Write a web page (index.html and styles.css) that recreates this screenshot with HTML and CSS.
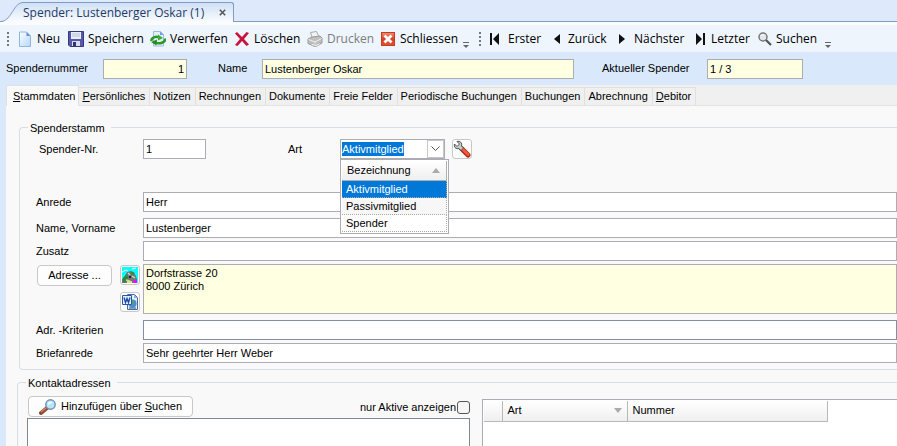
FILE: index.html
```html
<!DOCTYPE html>
<html lang="de">
<head>
<meta charset="utf-8">
<title>Spender: Lustenberger Oskar (1)</title>
<link rel="stylesheet" href="styles.css">
</head>
<body>
<header class="window-tabs">
  <svg class="tab-slope" viewBox="0 0 22 20" width="22" height="20" aria-hidden="true">
    <defs><linearGradient id="slope" x1="0" y1="0" x2="0" y2="1"><stop offset="0" stop-color="#cfe0f5"/><stop offset="1" stop-color="#fafcff"/></linearGradient></defs>
    <path d="M0 20C5 19 7 16 10 12C14 6 16 1 22 .5V20Z" fill="url(#slope)"/>
    <path d="M0 19.5C5 19 7 16 10 12C14 6 16 1 22 .5" fill="none" stroke="#7e9cc4"/>
  </svg>
  <div class="window-tab">
    <span>Spender: Lustenberger Oskar (1)</span>
    <button type="button" class="close" aria-label="Tab schliessen"><svg width="7" height="7" viewBox="0 0 7 7"><path d="M.8 .8L6.2 6.2M6.2 .8L.8 6.2" stroke="#555" stroke-width="1.5"/></svg></button>
  </div>
</header>

<nav class="toolbar" aria-label="Werkzeugleiste">
  <span class="grip"></span>
  <button type="button"><svg width="16" height="16" viewBox="0 0 16 16"><defs><linearGradient id="page" x1="0" y1="0" x2="1" y2="1"><stop offset="0" stop-color="#fff"/><stop offset="1" stop-color="#b4d6fb"/></linearGradient></defs><path d="M2.5 1H9.5L13.5 5V15.5H2.5Z" fill="url(#page)" stroke="#91b4e2"/><path d="M9.5 1V5H13.5Z" fill="#5c94d8"/></svg>Neu</button>
  <button type="button"><svg width="16" height="16" viewBox="0 0 16 16"><path d="M.5 .5H15.5V15.5H2L.5 14Z" fill="#5858ab" stroke="#37377f"/><path d="M3 1H13V8H3Z" fill="#e9edf8"/><path d="M4 3H12M4 5H12" stroke="#b9c2dc"/><path d="M4 10H12V15H4Z" fill="#d8dcec"/><path d="M5 11H8V15H5Z" fill="#33336e"/></svg>Speichern</button>
  <button type="button"><svg width="16" height="16" viewBox="0 0 16 16"><path d="M3.500 .5H10.500L13.500 3.500V15H3.500Z" fill="#e3effd" stroke="#9abbe4"/><path d="M10 .5V4H13.500Z" fill="#6c9fdd"/><path d="M1.500 10C1 6.500 6 5 9 6.500" fill="none" stroke="#2d9926" stroke-width="2.500"/><path d="M8 3.500L13 7L8 9.500Z" fill="#3cae2c"/><path d="M15 7.500C16 11.500 9 13.500 5.500 11.500" fill="none" stroke="#2d9926" stroke-width="2.500"/><path d="M7 8.500L1 11L6.500 14.500Z" fill="#258c20"/></svg>Verwerfen</button>
  <button type="button"><svg width="16" height="16" viewBox="0 0 16 16"><path d="M1 2.500L3 1L8 6L12.500 1L15 2L10 8L15 13.500L12.500 15L8 10L3.500 15L1 14L6 8Z" fill="#c8143c"/></svg>Löschen</button>
  <button type="button" disabled><svg width="16" height="16" viewBox="0 0 16 16"><path d="M3.500 1.500L9.500 .5L12 6L5.500 8Z" fill="#f4f4f4" stroke="#aaa"/><path d="M1 8L5 6L13 5L15 7V12L8 15.500L1 12.500Z" fill="#c0c0c0" stroke="#999"/><path d="M1.500 8.500L8 11L14.500 7.500M8 11V15" fill="none" stroke="#eee"/><path d="M4 12L9 13.500L13 11.500V13.500L9 15.500L4 14Z" fill="#f7f7f7" stroke="#999" stroke-width=".6"/></svg>Drucken</button>
  <button type="button"><svg width="16" height="16" viewBox="0 0 16 16"><defs><linearGradient id="red" x1="0" y1="0" x2="0" y2="1"><stop offset="0" stop-color="#ee9271"/><stop offset=".5" stop-color="#df3d23"/><stop offset="1" stop-color="#d95435"/></linearGradient></defs><rect x="1.500" y="1.500" width="13" height="13" fill="url(#red)" stroke="#c83b1f"/><path d="M4.500 4.500L11.500 11.500M11.500 4.500L4.500 11.500" stroke="#fff" stroke-width="2.800"/></svg>Schliessen</button>
  <span class="more"></span>
  <span class="grip"></span>
  <button type="button" class="step"><svg width="12" height="12" viewBox="0 0 12 12"><path d="M1 0H3V12H1ZM10 0V12L4 6Z" fill="#111"/></svg>Erster</button>
  <button type="button" class="step"><svg width="9" height="12" viewBox="0 0 9 12"><path d="M8 1V11L2 6Z" fill="#111"/></svg>Zurück</button>
  <button type="button" class="step"><svg width="9" height="12" viewBox="0 0 9 12"><path d="M1 1V11L7 6Z" fill="#111"/></svg>Nächster</button>
  <button type="button"><svg width="12" height="12" viewBox="0 0 12 12"><path d="M1 0L7 6L1 12ZM8 0H10V12H8Z" fill="#111"/></svg>Letzter</button>
  <button type="button"><svg width="14" height="14" viewBox="0 0 14 14"><circle cx="5" cy="5" r="4" fill="#e3e7ea" stroke="#777" stroke-width="1.500"/><path d="M3 4Q4 2.500 6 3" fill="none" stroke="#fff"/><path d="M8 8L13 13" stroke="#555" stroke-width="2.200"/></svg>Suchen</button>
  <span class="more"></span>
</nav>

<section class="summary">
  <label for="s-nr">Spendernummer</label><input id="s-nr" class="field note num" value="1" readonly>
  <label for="s-name">Name</label><input id="s-name" class="field note" value="Lustenberger Oskar" readonly>
  <label for="s-akt">Aktueller Spender</label><input id="s-akt" class="field note" value="1 / 3" readonly>
</section>

<div class="page">
  <nav class="tabs" aria-label="Register">
    <button type="button" class="active"><u>S</u>tammdaten</button>
    <button type="button"><u>P</u>ersönliches</button>
    <button type="button">Notizen</button>
    <button type="button">Rechnungen</button>
    <button type="button">Dokumente</button>
    <button type="button">Freie Felder</button>
    <button type="button">Periodische Buchungen</button>
    <button type="button">Buchungen</button>
    <button type="button">Abrechnung</button>
    <button type="button"><u>D</u>ebitor</button>
  </nav>

  <main>
    <section class="group master">
      <h2>Spenderstamm</h2>
      <div class="row first">
        <label for="nr" class="inset">Spender-Nr.</label>
        <input id="nr" class="field" value="1">
        <label for="art">Art</label>
        <div class="combo">
          <select id="art"><option>Aktivmitglied</option><option>Passivmitglied</option><option>Spender</option></select>
          <button type="button" aria-label="Liste öffnen"><svg width="9" height="6" viewBox="0 0 9 6"><path d="M.5 .5L4.500 4.500L8.500 .5" fill="none" stroke="#555"/></svg></button>
          <table class="dropdown">
            <thead><tr><th><span>Bezeichnung</span><svg width="8" height="5" viewBox="0 0 8 5"><path d="M4 0L8 5H0Z" fill="#aaa"/></svg></th></tr></thead>
            <tbody><tr class="selected"><td>Aktivmitglied</td></tr><tr class="alt"><td>Passivmitglied</td></tr><tr><td>Spender</td></tr></tbody>
          </table>
        </div>
        <button type="button" class="btn icon" aria-label="Art bearbeiten"><svg width="18" height="18" viewBox="0 0 18 18"><path d="M8.500 8.500L15 15" stroke="#a52813" stroke-width="5" stroke-linecap="round"/><path d="M9 8.500L15 14.500" stroke="#f4593b" stroke-width="3" stroke-linecap="round"/><path d="M4 1.500C7 .5 9.500 3 8.500 6L10.500 8L8 10.500L6 8.500C3 9.500 .5 7 1.500 4L4 6.500L6.500 4Z" fill="#c6cbcb" stroke="#4f5656"/></svg></button>
      </div>
      <div class="row salutation"><label for="anrede">Anrede</label><input id="anrede" class="field" value="Herr"></div>
      <div class="row"><label for="vorname">Name, Vorname</label><input id="vorname" class="field" value="Lustenberger"></div>
      <div class="row"><label for="zusatz">Zusatz</label><input id="zusatz" class="field"></div>
      <div class="row address">
        <div class="address-tools">
          <button type="button" class="btn">Adresse ...</button>
          <div class="stack">
            <button type="button" class="btn icon" aria-label="Karte"><svg width="16" height="16" viewBox="0 0 16 16"><path d="M0 0H16V16H0Z" fill="#0ff"/><path d="M0 5L4 3L6 4M10 2L14 1" stroke="#fff" fill="none"/><path d="M0 16V12L3 9L5 5L9 4L13 7L15 12V16Z" fill="#6f7774"/><path d="M1 11L5 7L6 11L3 15H1ZM9 4L13 6L10 8Z" fill="#2b8a35"/><path d="M6 6L8 8M10 9L13 11M4 13L8 14" stroke="#c9cfcc" stroke-width="1.500"/><path d="M7 9H9V11H7Z" fill="#222"/><path d="M5 14H10V16H5Z" fill="#e8e070"/><path d="M11 13H15V16H12Z" fill="#f0f"/></svg></button>
            <button type="button" class="btn icon" aria-label="Word"><svg width="16" height="16" viewBox="0 0 16 16"><path d="M5.500 .5H12.500L15.500 3.500V15.500H5.500Z" fill="#e6effc" stroke="#456aa8"/><path d="M12 .5V4H15.500Z" fill="#8fb0df"/><circle cx="10.500" cy="9.500" r="4" fill="#4b8dcb"/><path d="M8 8L11 6L12 9L9 12Z" fill="#4cab62"/><path d="M.5 1.500H9.500V10.500H.5Z" fill="#e8f0ff" stroke="#2958a8"/><path d="M2 3.500L3.500 8.500L5 4.500L6.500 8.500L8 3.500" fill="none" stroke="#1d4ca4" stroke-width="1.400"/><path d="M7 14H14" stroke="#264c8c"/></svg></button>
          </div>
        </div>
        <textarea class="field note" aria-label="Adresse">Dorfstrasse 20
8000 Zürich</textarea>
      </div>
      <div class="row criteria"><label for="krit">Adr. -Kriterien</label><input id="krit" class="field"></div>
      <div class="row"><label for="brief">Briefanrede</label><input id="brief" class="field" value="Sehr geehrter Herr Weber"></div>
    </section>

    <section class="group contacts">
      <h2>Kontaktadressen</h2>
      <div class="contact-list">
        <div class="contact-head">
          <button type="button" class="btn search"><svg width="18" height="16" viewBox="0 0 18 16"><path d="M2 14L8 9" stroke="#8a4d37" stroke-width="4" stroke-linecap="round"/><path d="M2 13L7 9" stroke="#dc8756" stroke-width="1.500"/><circle cx="11.500" cy="5.500" r="4.700" fill="#b9e5fb" stroke="#7290b4" stroke-width="1.400"/><path d="M9 4.500Q11 1.500 13.500 3.500Q11 4 9 6Z" fill="#fff"/></svg><span>Hinzufügen über <u>S</u>uchen</span></button>
          <label class="check">nur Aktive anzeigen<input type="checkbox"></label>
        </div>
        <div class="listbox"></div>
      </div>
      <div class="numbers">
        <table>
          <thead><tr><th class="marker"></th><th class="kind"><div>Art<svg width="8" height="5" viewBox="0 0 8 5"><path d="M0 0H8L4 5Z" fill="#aaa"/></svg></div></th><th class="number">Nummer</th></tr></thead>
        </table>
      </div>
    </section>
  </main>
</div>
</body>
</html>
```

FILE: styles.css
```css
* { box-sizing: border-box; }
html, body { height: 100%; }
body {
  margin: 0;
  display: flex;
  flex-direction: column;
  overflow: hidden;
  background: #d9e9fb;
  color: #000;
  font: 11px/13px "Liberation Sans", Arial, sans-serif;
}
button, input, select, textarea { font: inherit; color: inherit; margin: 0; }
button { padding: 0; border: 0; background: none; }
svg { flex: none; display: block; }
h2 { margin: 0; font: inherit; }

/* Window tab strip */
.window-tabs {
  flex: none;
  display: flex;
  align-items: flex-end;
  height: 25px;
  padding: 0 0 3px 1px;
  background: linear-gradient(#deeafb 21px, #7e9cc4 21px, #7e9cc4 22px, #fafcff 22px);
}
.tab-slope { margin-right: -1px; }
.window-tab {
  display: flex;
  align-items: center;
  justify-content: space-between;
  width: 212px;
  height: 20px;
  padding: 0 7px 0 1px;
  border: solid #7e9cc4;
  border-width: 1px 1px 0 0;
  border-radius: 0 3px 0 0;
  background: linear-gradient(#cfe0f5, #fafcff);
  color: #1f3b68;
  font: 12px/18px "Open Sans", "Noto Sans", sans-serif;
  white-space: nowrap;
}

/* Toolbar */
.toolbar {
  flex: none;
  display: grid;
  grid-template-columns: 10px 51px 82px 84px 73px 73px 83px 16px 10px 63px 66px 77px 63px 67px 8px;
  align-items: center;
  height: 27px;
  padding-left: 7px;
  background: #eef5fd;
  font: 12px/16px "Open Sans", "Noto Sans", sans-serif;
  white-space: nowrap;
}
.toolbar button { display: flex; align-items: center; gap: 4px; }
.toolbar .step { gap: 7px; }
.toolbar button:disabled { color: #7d7d7d; }
.grip {
  width: 2px;
  height: 14px;
  background: repeating-linear-gradient(#777 0 2px, transparent 2px 4px);
}
.more {
  align-self: end;
  width: 6px;
  height: 10px;
  background: linear-gradient(#666, #666) top / 6px 1px no-repeat;
}
.more::after {
  content: "";
  display: block;
  margin-top: 3px;
  border: 3px solid transparent;
  border-top-color: #666;
}

/* Fields */
.field {
  min-width: 0;
  width: 100%;
  height: 20px;
  padding: 0 2px;
  border: 1px solid #abadb3;
  border-radius: 0;
  background: #fff;
  outline: 0;
}
.note { background: #ffffe1; }
.num { text-align: right; }

.summary {
  flex: none;
  display: grid;
  grid-template-columns: 97px 84px 75px 312px 133px 96px;
  align-items: center;
  height: 33px;
  padding-left: 6px;
}
.summary label { justify-self: start; }
.summary label:nth-of-type(2) { padding-left: 31px; }
.summary label:nth-of-type(3) { padding-left: 28px; }

/* Register tabs */
.page {
  flex: 1;
  min-height: 0;
  display: flex;
  flex-direction: column;
  margin-left: 6px;
  background: #f9f9f9;
}
.tabs {
  flex: none;
  display: flex;
  align-items: flex-end;
  height: 21px;
  background: #f0f0f0;
  border-bottom: 1px solid #e3e3e3;
}
.tabs button {
  height: 18px;
  padding: 0 4px 0 3px;
  border: solid #e0e0e0;
  border-width: 1px 1px 0 0;
  white-space: nowrap;
}
.tabs .active {
  height: 21px;
  margin-bottom: -1px;
  padding: 0 3px 0 6px;
  border-left-width: 1px;
  background: #f9f9f9;
}

/* Groups */
main { flex: 1; min-height: 0; padding: 21px 0 0 13px; overflow: hidden; }
.group {
  position: relative;
  border: solid #d5dfe5;
  border-width: 1px 0 1px 1px;
  border-radius: 4px 0 0 4px;
}
.group > h2 {
  position: absolute;
  top: -6px;
  left: 8px;
  padding: 0 6px 0 2px;
  background: #f9f9f9;
}
.master { padding: 11px 0 3px 16px; }
.row {
  display: grid;
  grid-template-columns: 107px 1fr;
  align-items: center;
  margin-bottom: 3px;
}
.row.first {
  grid-template-columns: 107px 63px 82px 52px 112px 20px;
  margin-bottom: 33px;
}
.row.first > label:nth-of-type(2) { grid-column: 4; }
.inset { padding-left: 3px; }
.salutation { margin-bottom: 6px; }
.address { align-items: start; margin-bottom: 6px; }
.address textarea {
  display: block;
  height: 50px;
  padding: 2px;
  resize: none;
  overflow: hidden;
}
.address-tools { display: flex; gap: 8px; padding: 1px 0 0 1px; }
.address-tools > .btn { width: 75px; height: 21px; }
.stack { display: flex; flex-direction: column; gap: 7px; }
.criteria .field { border-color: #828fa5; }

.btn {
  display: flex;
  align-items: center;
  justify-content: center;
  border: 1px solid #c8c8c8;
  border-radius: 4px;
  background: #fdfdfd;
}
.btn.icon { width: 20px; height: 20px; border-radius: 3px; }

/* Combo box with its open list */
.combo {
  position: relative;
  display: flex;
  align-items: center;
  justify-content: space-between;
  width: 105px;
  height: 20px;
  padding-left: 1px;
  border: 1px solid #abadb3;
  background: #fff;
}
.combo select {
  appearance: none;
  width: 62px;
  height: 14px;
  padding: 0;
  border: 0;
  border-radius: 0;
  background: #0078d7;
  color: #fff;
  line-height: 14px;
}
.combo > button {
  display: flex;
  align-items: center;
  justify-content: center;
  width: 17px;
  height: 18px;
  border: 1px solid #c8c8c8;
}
.dropdown {
  position: absolute;
  z-index: 2;
  top: 19px;
  left: -1px;
  width: 109px;
  padding: 1px;
  border: 1px solid #abadb3;
  border-spacing: 0;
  background: #fff;
}
.dropdown th {
  display: flex;
  align-items: center;
  justify-content: space-between;
  height: 20px;
  padding: 0 6px 0 5px;
  border: solid #b0b0b0;
  border-width: 0 1px 1px 0;
  background: linear-gradient(#fff, #efefef);
  font-weight: normal;
}
.dropdown td {
  height: 17px;
  padding: 0 4px;
  border: dotted #aaa;
  border-width: 0 1px 1px 0;
}
.dropdown .alt { background: #f7f7f7; }
.dropdown .selected { background: #0078d7; color: #fff; }

/* Contact addresses */
.contacts {
  display: grid;
  grid-template-columns: 443px 1fr;
  gap: 12px;
  height: 120px;
  margin: 12px 0 0 -2px;
  padding: 13px 0 0 9px;
}
.contact-list { display: flex; flex-direction: column; }
.contact-head { display: flex; justify-content: space-between; height: 22px; }
.btn.search { width: 165px; height: 21px; gap: 4px; margin-left: 1px; }
.check { display: flex; align-items: center; gap: 1px; }
.check input {
  appearance: none;
  width: 13px;
  height: 13px;
  border: 1px solid #555;
  border-radius: 3px;
  background: #f6f6f6;
}
.listbox { flex: 1; border: 1px solid #828790; background: #fff; }
.numbers {
  margin-top: 3px;
  padding: 1px;
  border: solid #abadb3;
  border-width: 1px 0 0 1px;
  background: #fff;
}
.numbers table { border-collapse: collapse; table-layout: fixed; width: 343px; }
.numbers th {
  height: 20px;
  padding: 0 5px;
  border: solid #b8b8b8;
  border-width: 0 1px 1px 0;
  background: linear-gradient(#fff, #efefef);
  font-weight: normal;
  text-align: left;
}
.numbers th > div { display: flex; align-items: center; justify-content: space-between; }
.marker { width: 18px; }
.kind { width: 125px; }
.number { width: 200px; }
```
